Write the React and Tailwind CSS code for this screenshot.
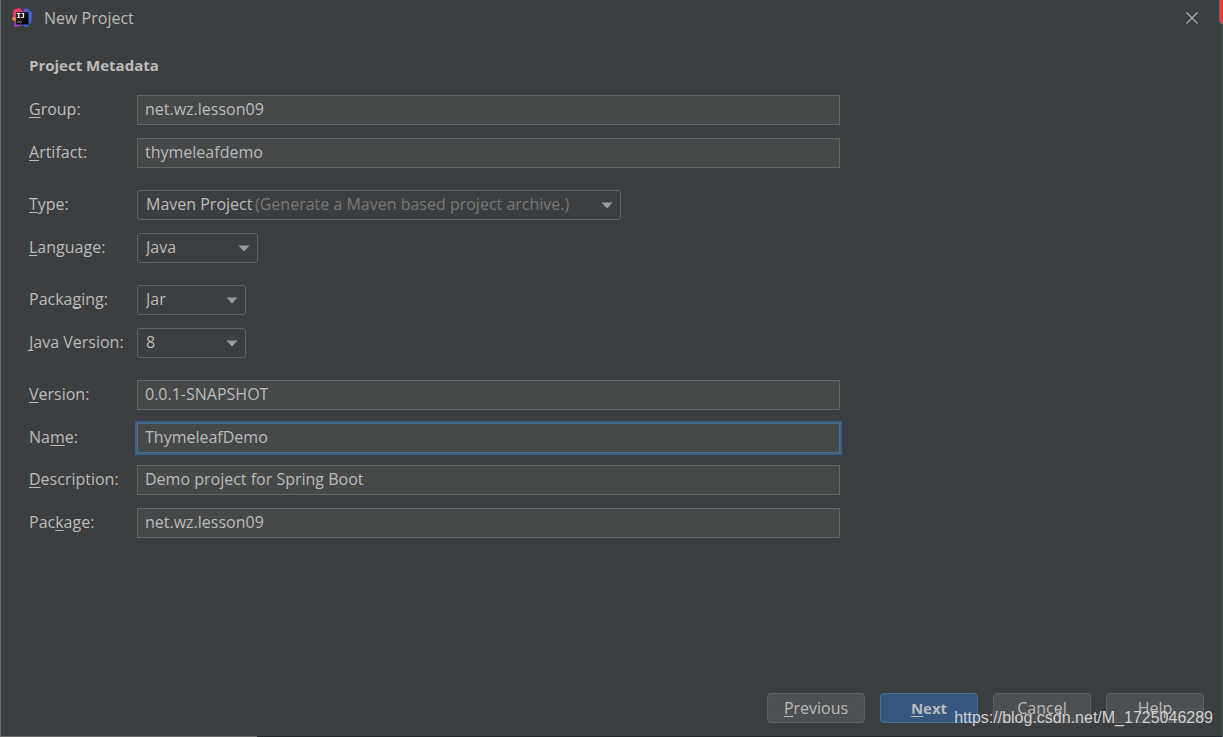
import { useState } from "react";

function Mnemonic({ text, at = 0 }) {
  return (
    <>
      {text.slice(0, at)}
      <span className="underline decoration-1 underline-offset-2 [text-decoration-skip-ink:none]">{text[at]}</span>
      {text.slice(at + 1)}
    </>
  );
}

function Row({ id, label, at, children }) {
  return (
    <div className="flex items-center">
      <label htmlFor={id} className="w-27 shrink-0 pb-0.5 leading-7 whitespace-nowrap">
        <Mnemonic text={label} at={at} />
      </label>
      {children}
    </div>
  );
}

function TextRow({ id, label, at, value, focused }) {
  const [text, setText] = useState(value);
  return (
    <Row id={id} label={label} at={at}>
      <input
        id={id}
        type="text"
        value={text}
        onChange={(e) => setText(e.target.value)}
        className={
          "h-[30px] w-full max-w-[703px] min-w-0 border bg-[#45494a] px-[7px] pb-0.5 outline-none focus:border-[#466d94] focus:ring-2 focus:ring-[#3d6185] " +
          (focused ? "border-[#466d94] ring-2 ring-[#3d6185]" : "border-[#646464]")
        }
      />
    </Row>
  );
}

function SelectRow({ id, label, at, options, width, hint }) {
  return (
    <Row id={id} label={label} at={at}>
      <div className={"relative " + width}>
        <select
          id={id}
          className="block h-[30px] w-full appearance-none rounded-[3px] border border-[#646464] bg-[#3c3f41] px-2 pb-0.5 outline-none focus:border-[#466d94]"
        >
          {options.map((o) => (
            <option key={o}>{o}</option>
          ))}
        </select>
        {hint && (
          <span className="pointer-events-none absolute inset-y-0 left-[118px] flex items-center pb-0.5 whitespace-nowrap text-[#777777]">
            {hint}
          </span>
        )}
        <svg className="pointer-events-none absolute top-3 right-2 h-[7px] w-3" viewBox="0 0 12 7" aria-hidden="true">
          <path d="M0.5 0.5H11.5L6 6.5Z" fill="#9a9da0" />
        </svg>
      </div>
    </Row>
  );
}

function Logo() {
  return (
    <svg className="size-5" viewBox="0 0 20 20" aria-hidden="true">
      <defs>
        <linearGradient id="lg-pink" x1="0" y1="0" x2="1" y2="1">
          <stop offset="0" stopColor="#fe315d" />
          <stop offset="1" stopColor="#c43a9a" />
        </linearGradient>
        <linearGradient id="lg-blue" x1="0" y1="0" x2="1" y2="1">
          <stop offset="0" stopColor="#7a4fd0" />
          <stop offset="0.5" stopColor="#3f68dc" />
          <stop offset="1" stopColor="#3a5be0" />
        </linearGradient>
        <linearGradient id="lg-core" x1="0" y1="0" x2="1" y2="1">
          <stop offset="0" stopColor="#2a2a2c" />
          <stop offset="1" stopColor="#000000" />
        </linearGradient>
      </defs>
      <path d="M12 1L15 0.5L20 5L19.5 14L15 19L9 17Z" fill="url(#lg-blue)" />
      <path d="M0 11L3 6L6 12L4 15Z" fill="#f78a1d" />
      <path d="M3 12L12 16L8 18L2 19Z" fill="#9a3fc4" />
      <path d="M1.5 1.5L8 0L13 5L9 11L3 10L1 7Z" fill="url(#lg-pink)" />
      <rect x="4" y="4" width="12.5" height="12.5" fill="url(#lg-core)" />
      <path d="M5.2 5.5H8.2M6.7 5.5V9.5M5.2 9.5H8.2M9.6 5.5H12M11.5 5.5V8.5Q11.5 9.5 10.4 9.5H9.2" fill="none" stroke="#fff" strokeWidth="1.2" />
      <path d="M5.2 14H10" stroke="#8d8d8d" strokeWidth="1" />
    </svg>
  );
}

const button =
  "h-[30px] w-[98px] rounded-[4px] border border-[#5e6060] bg-[#4c5052] text-center hover:bg-[#55595b]";

export default function App() {
  return (
    <div className="relative flex min-h-screen flex-col overflow-hidden border-l border-[#6b6d6e] bg-[#3c3f41] font-['Open_Sans','Noto_Sans',sans-serif] text-[16px] text-[#bbbbbb]">
      <header className="flex h-9 items-center pr-[23px] pl-[11px]">
        <Logo />
        <h1 className="ml-3 flex-1">New Project</h1>
        <button type="button" aria-label="Close" className="flex size-4 items-center justify-center">
          <svg className="size-3" viewBox="0 0 12 12" aria-hidden="true">
            <path d="M0.5 0.5L11.5 11.5M11.5 0.5L0.5 11.5" stroke="#b5b7b8" strokeWidth="1.1" />
          </svg>
        </button>
      </header>

      <main className="flex-1 px-7 pt-[17px]">
        <h2 className="text-[15px] leading-6 font-bold">Project Metadata</h2>
        <form className="mt-[18px] flex flex-col gap-[22px]">
          <div className="flex flex-col gap-[13px]">
            <TextRow id="group" label="Group:" value="net.wz.lesson09" />
            <TextRow id="artifact" label="Artifact:" value="thymeleafdemo" />
          </div>
          <div className="flex flex-col gap-[13px]">
            <SelectRow
              id="type"
              label="Type:"
              options={["Maven Project"]}
              hint="(Generate a Maven based project archive.)"
              width="w-[484px]"
            />
            <SelectRow id="language" label="Language:" options={["Java", "Kotlin", "Groovy"]} width="w-[121px]" />
          </div>
          <div className="flex flex-col gap-[13px]">
            <SelectRow id="packaging" label="Packaging:" at={5} options={["Jar", "War"]} width="w-[109px]" />
            <SelectRow id="java" label="Java Version:" options={["8", "11"]} width="w-[109px]" />
          </div>
          <div className="flex flex-col gap-3">
            <div className="flex flex-col gap-[13px]">
              <TextRow id="version" label="Version:" value="0.0.1-SNAPSHOT" />
              <TextRow id="name" label="Name:" at={2} value="ThymeleafDemo" focused />
            </div>
            <div className="flex flex-col gap-[13px]">
              <TextRow id="description" label="Description:" value="Demo project for Spring Boot" />
              <TextRow id="package" label="Package:" at={3} value="net.wz.lesson09" />
            </div>
          </div>
        </form>
      </main>

      <footer className="flex justify-end gap-[15px] pr-[19px] pb-[13px]">
        <button type="button" className={button}>
          <Mnemonic text="Previous" />
        </button>
        <button
          type="button"
          className="h-[30px] w-[98px] rounded-[4px] border border-[#4c708c] bg-[#365880] text-center text-[15px] font-bold hover:bg-[#3d6490]"
        >
          <Mnemonic text="Next" />
        </button>
        <button type="button" className={button}>
          Cancel
        </button>
        <button type="button" className={button}>
          Help
        </button>
      </footer>

      <div className="flex h-px">
        <div className="w-64 bg-[#6b6d6e]" />
        <div className="flex-1 bg-[#22282b]" />
      </div>

      <div className="absolute top-0 right-0 h-6 w-1 rounded-bl-[4px] border-b border-l border-[#6b6d6e] bg-[#f03a3a]" />
      <div className="absolute top-6 right-0 bottom-0 w-px bg-[#44525a]" />
      <span className="pointer-events-none absolute right-[10px] bottom-[9px] font-['Liberation_Sans',Arial,sans-serif] text-[16px] leading-5 text-[#d0d1d2]">
        https://blog.csdn.net/M_1725046289
      </span>
    </div>
  );
}
